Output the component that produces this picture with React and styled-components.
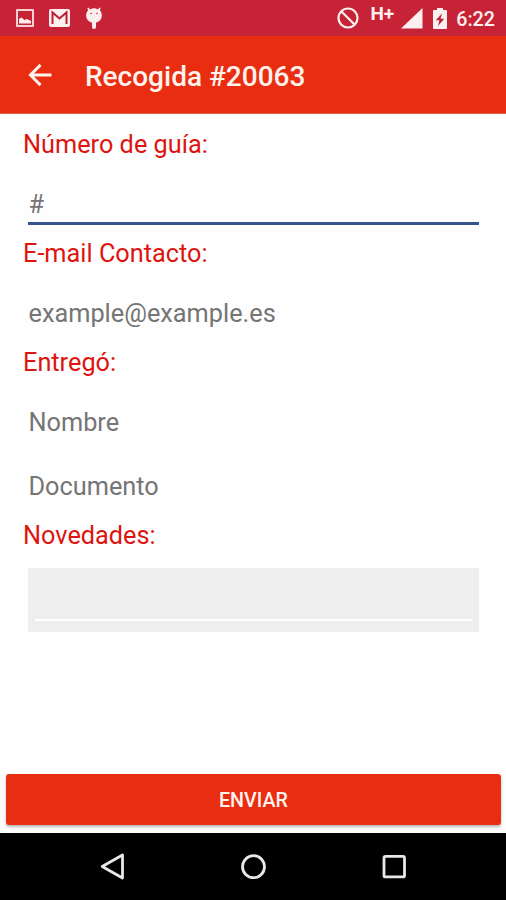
import { useState } from "react";
import styled, { createGlobalStyle, ThemeProvider } from "styled-components";

const theme = {
    colors: {
        status: "#c62436",
        primary: "#e92d10",
        label: "#dd1510",
        accent: "#36548c",
        hint: "#757575",
        area: "#eeeeee",
    },
    font: `Roboto, "Liberation Sans", sans-serif`,
};

const GlobalStyle = createGlobalStyle`
    *{
        box-sizing: border-box;
    }
    body{
        margin: 0;
        background-color: #fff;
    }
`;

const Screen = styled.div`
    display: flex;
    flex-direction: column;
    width: 100%;
    height: 100vh;
    overflow: hidden;
    background-color: #fefefe;
    font-family: ${props => props.theme.font};
`;

const StatusBar = styled.div`
    display: flex;
    justify-content: space-between;
    flex: none;
    height: 36px;
    background-color: ${props => props.theme.colors.status};
    color: #fdeef0;
`;

const StatusGroup = styled.div`
    display: flex;
    align-items: center;
    height: 36px;
    padding: ${props => props.$padding};
    gap: ${props => props.$gap};
`;

const Network = styled.span`
    align-self: flex-start;
    margin: 5px -1px 0 3px;
    font-size: 19px;
    font-weight: 700;
    line-height: 18px;
`;

const Clock = styled.span`
    margin: 3px 0 0 1px;
    font-size: 19.7px;
    font-weight: 500;
    line-height: 24px;
`;

const Toolbar = styled.header`
    display: flex;
    align-items: center;
    flex: none;
    height: 78px;
    padding: 2px 0 0 27px;
    background-color: ${props => props.theme.colors.primary};
    border-bottom: 1px solid #e8604c;
    color: #fff3ee;
`;

const BackButton = styled.button`
    display: grid;
    place-items: center;
    width: 26px;
    height: 26px;
    margin-bottom: 2px;
    padding: 0;
    border: 0;
    background: none;
    color: inherit;
    cursor: pointer;
`;

const Title = styled.h1`
    margin: 1px 0 0 32px;
    font-size: 28px;
    font-weight: 500;
    line-height: 35px;
`;

const Form = styled.form`
    display: flex;
    flex-direction: column;
    flex: 1;
    padding: 16px 5px 8px 6px;
`;

const Fields = styled.div`
    flex: 1;
    padding: 0 22px 0 17px;
`;

const Label = styled.label`
    display: block;
    height: 30px;
    margin-bottom: 15px;
    color: ${props => props.theme.colors.label};
    font-size: 25.3px;
    line-height: 30px;
`;

const Field = styled.div`
    height: 64px;
    padding: 13px 0 0 5px;
`;

const Input = styled.input`
    display: block;
    width: 100%;
    height: 37px;
    padding: 0 0 2px 0.5px;
    border: 0;
    border-bottom: 3px solid ${props => props.$active ? props.theme.colors.accent : "transparent"};
    border-radius: 0;
    outline: none;
    background: none;
    font-family: inherit;
    font-size: 25.3px;
    line-height: 30px;
    &::placeholder{
        color: ${props => props.theme.colors.hint};
        opacity: 1;
    }
`;

const NotesBox = styled.div`
    height: 64px;
    margin: 17px 0 0 5px;
    padding: 8px 7px 0;
    background-color: ${props => props.theme.colors.area};
`;

const Notes = styled.textarea`
    display: block;
    width: 100%;
    height: 45px;
    padding: 0;
    border: 0;
    border-bottom: 2px solid #fff;
    outline: none;
    background: none;
    resize: none;
    font-family: inherit;
    font-size: 25.3px;
`;

const Submit = styled.button`
    flex: none;
    height: 51px;
    padding: 1px 0 0;
    border: 0;
    border-radius: 3px;
    background-color: ${props => props.theme.colors.primary};
    box-shadow: 0 2px 3px rgba(0, 0, 0, 0.28);
    color: #fff3ee;
    font-family: inherit;
    font-size: 19.7px;
    font-weight: 500;
    cursor: pointer;
`;

const NavigationBar = styled.nav`
    display: flex;
    justify-content: center;
    flex: none;
    gap: 113px;
    height: 67px;
    padding-top: 19px;
    background-color: #000;
`;

const ImageIcon = () => (
    <svg width="18" height="18" viewBox="0 0 18 18">
        <path fill="currentColor" fillRule="evenodd" d="M1 0h16a1 1 0 0 1 1 1v16a1 1 0 0 1-1 1H1a1 1 0 0 1-1-1V1a1 1 0 0 1 1-1zM2 2v14h14V2z" opacity=".85" />
        <path fill="currentColor" d="M3 14.500V10l2.500-1.500L8.500 11l2.500-1 4 2v2.500z" />
    </svg>
);

const MailIcon = () => (
    <svg width="21" height="18" viewBox="0 0 21 18">
        <rect width="21" height="18" rx="2" fill="currentColor" />
        <path d="M3.500 15V3.500l7 6 7-6V15" fill="none" stroke="#b91f30" strokeWidth="2" />
    </svg>
);

const DroidIcon = () => (
    <svg width="18" height="22" viewBox="0 0 18 22">
        <path fill="currentColor" d="M3.200.5l2 1.900a8 8 0 0 1 7.600 0L14.800.5l.8.600-.7 2.500C16.300 5 16.800 6.500 16.800 8.500c0 4-2.600 6.500-5.800 7V20a2 2 0 0 1-4 0v-4.500c-3.200-.5-5.800-3-5.800-7 0-2 .5-3.500 1.900-4.900L2.400 1.100z" />
        <circle cx="6" cy="6.500" r=".8" fill="#c62436" />
        <circle cx="12" cy="6.500" r=".8" fill="#c62436" />
    </svg>
);

const BlockedIcon = () => (
    <svg width="22" height="22" viewBox="0 0 22 22" fill="none" stroke="currentColor" strokeWidth="2.200">
        <circle cx="11" cy="11" r="9.500" />
        <path d="M4.500 4.500l13 13" />
    </svg>
);

const SignalIcon = () => (
    <svg width="24" height="21" viewBox="0 0 24 21">
        <path fill="currentColor" d="M21.500 0v20.500H0z" />
    </svg>
);

const BatteryIcon = () => (
    <svg width="14" height="21" viewBox="0 0 14 21">
        <path fill="currentColor" d="M4 0h6v2h3a1 1 0 0 1 1 1v17a1 1 0 0 1-1 1H1a1 1 0 0 1-1-1V3a1 1 0 0 1 1-1h3z" />
        <path fill="#b91f30" d="M9 5.500L2.800 12.300h3.700L5 18l6.200-7.300H7.500z" />
    </svg>
);

const ArrowIcon = () => (
    <svg width="26" height="26" viewBox="0 0 26 26" fill="none" stroke="currentColor" strokeWidth="2.900">
        <path d="M24.500 13H4M13.500 2.900L3.400 13l10.100 10.100" />
    </svg>
);

const BackKey = () => (
    <svg width="28" height="28" viewBox="0 0 28 28" fill="none" stroke="#e8e8e8" strokeWidth="2.800" strokeLinejoin="round">
        <path d="M24.500 3v23L4.200 14.500z" />
    </svg>
);

const HomeKey = () => (
    <svg width="28" height="28" viewBox="0 0 28 28" fill="none" stroke="#e8e8e8" strokeWidth="2.800">
        <circle cx="14.500" cy="14.700" r="11" />
    </svg>
);

const RecentKey = () => (
    <svg width="28" height="28" viewBox="0 0 28 28" fill="none" stroke="#e8e8e8" strokeWidth="2.800">
        <rect x="4" y="4.400" width="20.500" height="20.500" rx="1.500" />
    </svg>
);

export default function App() {
    const [active, setActive] = useState("guia");

    const field = (name, placeholder) => (
        <Field>
            <Input id={name} placeholder={placeholder} $active={active === name} onFocus={() => setActive(name)} />
        </Field>
    );

    return (
        <ThemeProvider theme={theme}>
            <GlobalStyle />
            <Screen>
                <StatusBar>
                    <StatusGroup $padding="0 0 0 16px" $gap="15px">
                        <ImageIcon />
                        <MailIcon />
                        <DroidIcon />
                    </StatusGroup>
                    <StatusGroup $padding="0 11px 0 0" $gap="8px">
                        <BlockedIcon />
                        <Network>H+</Network>
                        <SignalIcon />
                        <BatteryIcon />
                        <Clock>6:22</Clock>
                    </StatusGroup>
                </StatusBar>
                <Toolbar>
                    <BackButton><ArrowIcon /></BackButton>
                    <Title>Recogida #20063</Title>
                </Toolbar>
                <Form onSubmit={e => e.preventDefault()}>
                    <Fields>
                        <Label htmlFor="guia">Número de guía:</Label>
                        {field("guia", "#")}
                        <Label htmlFor="email">E-mail Contacto:</Label>
                        {field("email", "example@example.es")}
                        <Label htmlFor="nombre">Entregó:</Label>
                        {field("nombre", "Nombre")}
                        {field("documento", "Documento")}
                        <Label htmlFor="novedades">Novedades:</Label>
                        <NotesBox>
                            <Notes id="novedades" />
                        </NotesBox>
                    </Fields>
                    <Submit>ENVIAR</Submit>
                </Form>
                <NavigationBar>
                    <BackKey />
                    <HomeKey />
                    <RecentKey />
                </NavigationBar>
            </Screen>
        </ThemeProvider>
    );
}
